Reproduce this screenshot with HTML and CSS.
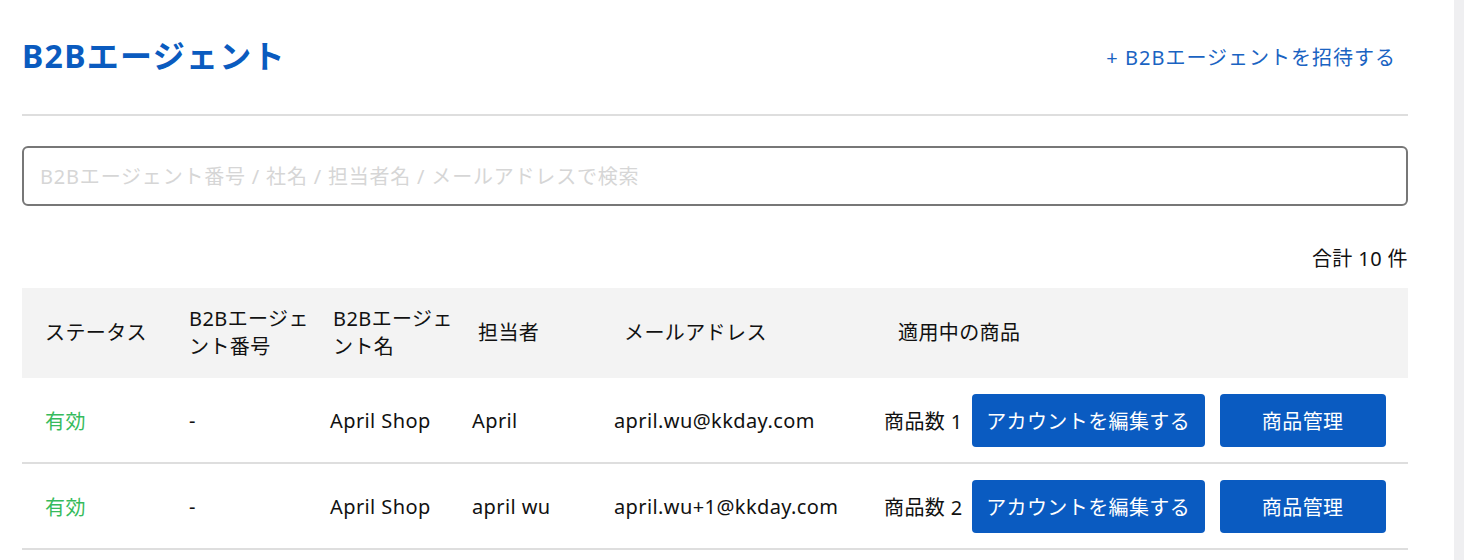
FILE: index.html
```html
<!DOCTYPE html>
<html lang="ja">
<head>
<meta charset="utf-8">
<title>B2Bエージェント</title>
<link rel="stylesheet" href="styles.css">
</head>
<body>
<div class="page">
  <main class="main">
    <div class="top">
      <h1 class="title">B2Bエージェント</h1>
      <a class="invite" href="#">+ B2Bエージェントを招待する</a>
    </div>
    <hr class="rule">
    <input class="search" type="text" placeholder="B2Bエージェント番号 / 社名 / 担当者名 / メールアドレスで検索">
    <div class="total">合計 10 件</div>
    <div class="table">
      <div class="row head">
        <div class="cell h1">ステータス</div>
        <div class="cell h2"><span class="wrap">B2Bエージェント番号</span></div>
        <div class="cell h3"><span class="wrap">B2Bエージェント名</span></div>
        <div class="cell h4">担当者</div>
        <div class="cell h5">メールアドレス</div>
        <div class="cell h6">適用中の商品</div>
      </div>
      <div class="row body">
        <div class="cell status">有効</div>
        <div class="cell">-</div>
        <div class="cell name">April Shop</div>
        <div class="cell">April</div>
        <div class="cell">april.wu@kkday.com</div>
        <div class="cell actions">
          <span class="count">商品数 1</span>
          <button class="btn edit">アカウントを編集する</button>
          <button class="btn manage">商品管理</button>
        </div>
      </div>
      <div class="row body">
        <div class="cell status">有効</div>
        <div class="cell">-</div>
        <div class="cell name">April Shop</div>
        <div class="cell">april wu</div>
        <div class="cell">april.wu+1@kkday.com</div>
        <div class="cell actions">
          <span class="count">商品数 2</span>
          <button class="btn edit">アカウントを編集する</button>
          <button class="btn manage">商品管理</button>
        </div>
      </div>
    </div>
  </main>
  <div class="track"></div>
</div>
</body>
</html>
```

FILE: styles.css
```css
* { box-sizing: border-box; }
html, body { margin: 0; padding: 0; background: #fff; }
body {
  font-family: "Noto Sans", "Noto Sans CJK JP", sans-serif;
  font-size: 20px;
  color: #111;
  letter-spacing: 0.4px;
}
.page { display: flex; height: 560px; overflow: hidden; }
.main { flex: 1; padding: 0 46px 0 22px; min-width: 0; }
.track { width: 10px; background: #efeff1; }

.top {
  display: flex;
  align-items: center;
  justify-content: space-between;
  padding-top: 36px;
  height: 76px;
}
.title {
  margin: 0;
  font-size: 32px;
  line-height: 40px;
  font-weight: 700;
  color: #0a5bbf;
  letter-spacing: 1.3px;
}
.invite {
  color: #1a63c2;
  text-decoration: none;
  font-size: 20px;
  letter-spacing: 1px;
  margin-right: 12px;
}
.rule {
  margin: 38px 0 0;
  border: 0;
  height: 2px;
  background: #dedede;
}
.search {
  display: block;
  width: 100%;
  height: 60px;
  margin-top: 30px;
  border: 2px solid #777;
  border-radius: 6px;
  padding: 0 16px;
  font: inherit;
  letter-spacing: 0.8px;
  outline: none;
}
.search::placeholder { color: #d6d6d6; }

.total {
  margin-top: 39px;
  text-align: right;
  line-height: 28px;
}
.table { margin-top: 15px; }
.row {
  display: grid;
  grid-template-columns: 144px 144px 139px 142px 270px 1fr;
}
.head {
  background: #f3f3f3;
  height: 90px;
  line-height: 28px;
}
.head .cell { display: flex; align-items: center; }
.cell { padding-left: 23px; }
.wrap { display: block; width: 126px; flex: none; }
.h4 { padding-left: 29px; }
.h5 { padding-left: 33px; }
.h6 { padding-left: 37px; }

.body {
  height: 86px;
  border-bottom: 2px solid #dedede;
  align-items: center;
}
.name { padding-left: 20px; }
.status { color: #36bb5c; }
.actions { display: flex; align-items: center; }
.count { margin-right: 9px; white-space: nowrap; }
.btn {
  font: inherit;
  letter-spacing: 0.4px;
  color: #fff;
  background: #0a5bc1;
  border: 0;
  border-radius: 4px;
  height: 53px;
  padding: 0;
}
.edit { width: 233px; }
.manage { width: 166px; margin-left: 15px; }
```
